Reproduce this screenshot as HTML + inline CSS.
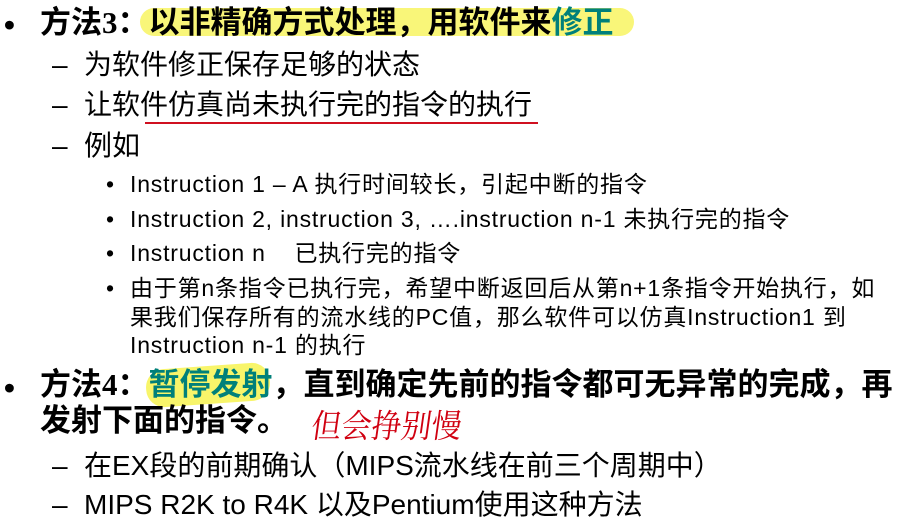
<!DOCTYPE html>
<html><head><meta charset="utf-8"><style>
body{margin:0;width:922px;height:530px;background:#fff;position:relative;overflow:hidden;font-family:"Liberation Sans","Noto Sans CJK SC",sans-serif;color:#000}
.a{position:absolute;white-space:nowrap;line-height:1}
.b1{font-size:31px;font-weight:bold}
.b2{font-size:28px}
.b3{font-size:23px;letter-spacing:0.8px}
.g{color:#00807a}
</style></head><body>
<div class="a" style="left:140px;top:8px;width:494px;height:28px;background:#f8f56a;border-radius:14px;opacity:.9"></div>
<div class="a" style="left:146px;top:366px;width:124px;height:38px;background:#f8f56a;border-radius:18px;transform:rotate(-4deg)"></div>

<div class="a b1" style="left:4px;top:9px">•</div>
<div class="a b1" style="left:40px;top:7px"><span style="font-family:'Liberation Serif','Noto Sans CJK SC',serif">方法3：</span>以非精确方式处理，用软件来<span class="g">修正</span></div>

<div class="a b2" style="left:52px;top:51px">–</div>
<div class="a b2" style="left:84px;top:51px">为软件修正保存足够的状态</div>
<div class="a b2" style="left:52px;top:91px">–</div>
<div class="a b2" style="left:84px;top:91px">让软件仿真尚未执行完的指令的执行</div>
<div class="a" style="left:145px;top:122px;width:393px;height:2px;background:#d01020"></div>
<div class="a b2" style="left:52px;top:132px">–</div>
<div class="a b2" style="left:84px;top:132px">例如</div>

<div class="a b3" style="left:106px;top:173px">•</div>
<div class="a b3" style="left:130px;top:173px">Instruction 1 – A 执行时间较长，引起中断的指令</div>
<div class="a b3" style="left:106px;top:208px">•</div>
<div class="a b3" style="left:130px;top:208px">Instruction 2, instruction 3, ….instruction n-1 未执行完的指令</div>
<div class="a b3" style="left:106px;top:242px">•</div>
<div class="a b3" style="left:130px;top:242px">Instruction n&nbsp;&nbsp;&nbsp;&nbsp;已执行完的指令</div>
<div class="a b3" style="left:106px;top:277px">•</div>
<div class="a b3" style="left:130px;top:277px">由于第n条指令已执行完，希望中断返回后从第n+1条指令开始执行，如</div>
<div class="a b3" style="left:130px;top:306px">果我们保存所有的流水线的PC值，那么软件可以仿真Instruction1 到</div>
<div class="a b3" style="left:130px;top:334px">Instruction n-1 的执行</div>

<div class="a b1" style="left:4px;top:372px">•</div>
<div class="a b1" style="left:40px;top:369px"><span style="font-family:'Liberation Serif','Noto Sans CJK SC',serif">方法4：</span><span class="g">暂停发射</span>，直到确定先前的指令都可无异常的完成，再</div>
<div class="a b1" style="left:40px;top:405px">发射下面的指令。</div>
<div class="a" style="left:312px;top:408px;font-size:30px;color:#d00010;font-family:'Noto Serif CJK SC',serif;transform:skewX(-8deg) scaleY(1.1)">但会挣别慢</div>

<div class="a b2" style="left:52px;top:452px">–</div>
<div class="a b2" style="left:84px;top:452px">在EX段的前期确认（MIPS流水线在前三个周期中）</div>
<div class="a b2" style="left:52px;top:491px">–</div>
<div class="a b2" style="left:84px;top:491px">MIPS R2K to R4K 以及Pentium使用这种方法</div>
</body></html>
